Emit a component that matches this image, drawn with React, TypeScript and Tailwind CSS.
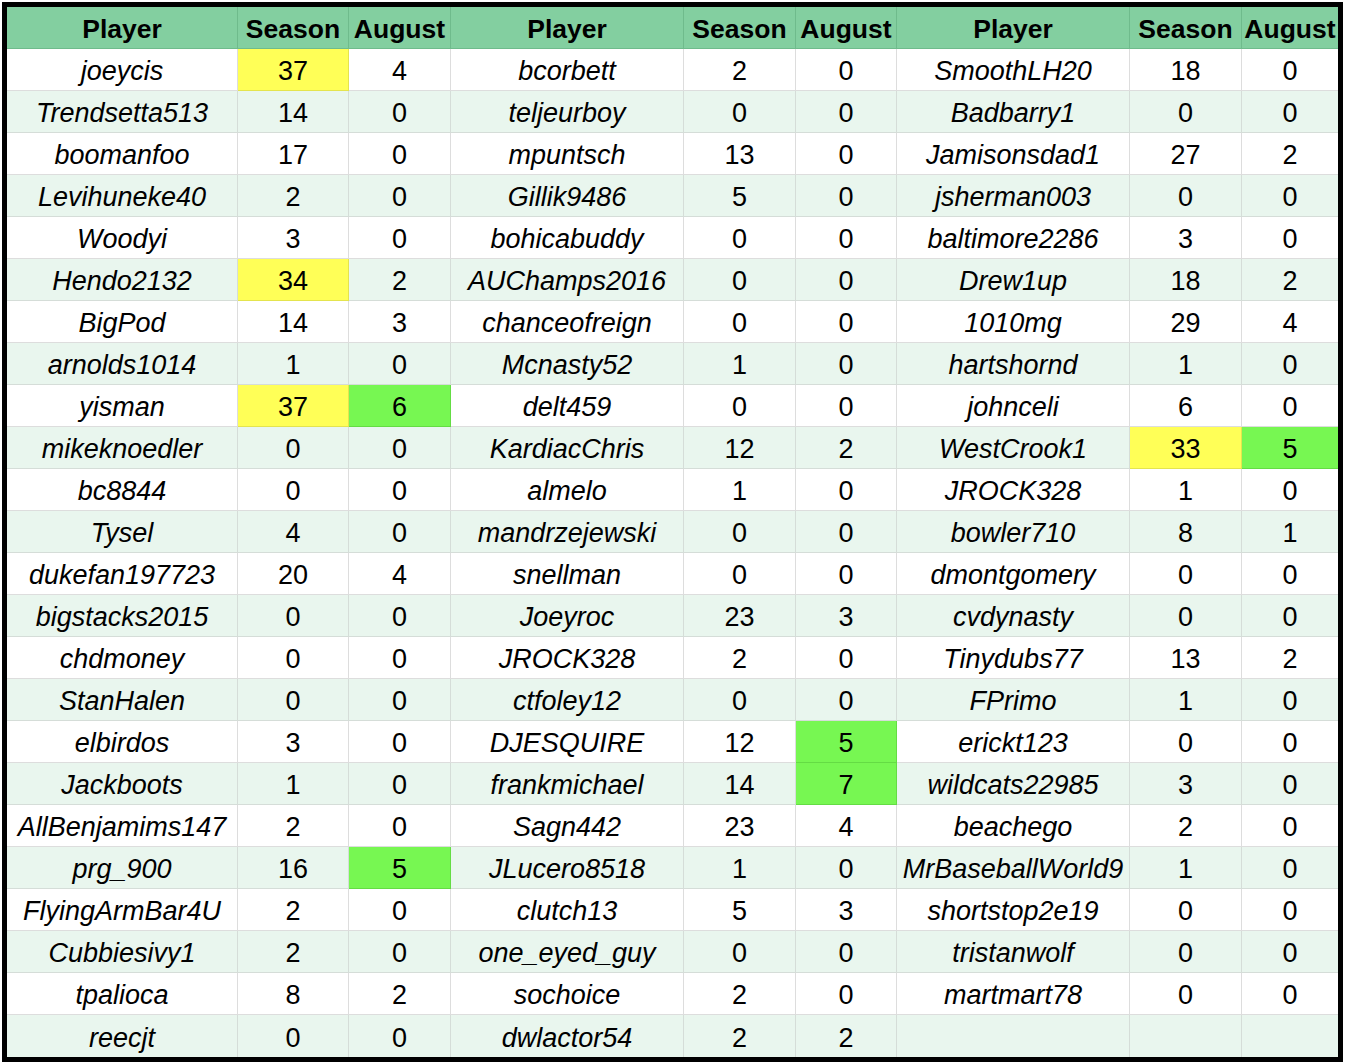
import React from "react";

type Row = [string, number, number, string?, string?];

// Y = yellow season cell, G = green august cell
const col1: Row[] = [
    ["joeycis", 37, 4, "Y"],
    ["Trendsetta513", 14, 0],
    ["boomanfoo", 17, 0],
    ["Levihuneke40", 2, 0],
    ["Woodyi", 3, 0],
    ["Hendo2132", 34, 2, "Y"],
    ["BigPod", 14, 3],
    ["arnolds1014", 1, 0],
    ["yisman", 37, 6, "Y", "G"],
    ["mikeknoedler", 0, 0],
    ["bc8844", 0, 0],
    ["Tysel", 4, 0],
    ["dukefan197723", 20, 4],
    ["bigstacks2015", 0, 0],
    ["chdmoney", 0, 0],
    ["StanHalen", 0, 0],
    ["elbirdos", 3, 0],
    ["Jackboots", 1, 0],
    ["AllBenjamims147", 2, 0],
    ["prg_900", 16, 5, "", "G"],
    ["FlyingArmBar4U", 2, 0],
    ["Cubbiesivy1", 2, 0],
    ["tpalioca", 8, 2],
    ["reecjt", 0, 0],
];

const col2: Row[] = [
    ["bcorbett", 2, 0],
    ["teljeurboy", 0, 0],
    ["mpuntsch", 13, 0],
    ["Gillik9486", 5, 0],
    ["bohicabuddy", 0, 0],
    ["AUChamps2016", 0, 0],
    ["chanceofreign", 0, 0],
    ["Mcnasty52", 1, 0],
    ["delt459", 0, 0],
    ["KardiacChris", 12, 2],
    ["almelo", 1, 0],
    ["mandrzejewski", 0, 0],
    ["snellman", 0, 0],
    ["Joeyroc", 23, 3],
    ["JROCK328", 2, 0],
    ["ctfoley12", 0, 0],
    ["DJESQUIRE", 12, 5, "", "G"],
    ["frankmichael", 14, 7, "", "G"],
    ["Sagn442", 23, 4],
    ["JLucero8518", 1, 0],
    ["clutch13", 5, 3],
    ["one_eyed_guy", 0, 0],
    ["sochoice", 2, 0],
    ["dwlactor54", 2, 2],
];

const col3: (Row | null)[] = [
    ["SmoothLH20", 18, 0],
    ["Badbarry1", 0, 0],
    ["Jamisonsdad1", 27, 2],
    ["jsherman003", 0, 0],
    ["baltimore2286", 3, 0],
    ["Drew1up", 18, 2],
    ["1010mg", 29, 4],
    ["hartshornd", 1, 0],
    ["johnceli", 6, 0],
    ["WestCrook1", 33, 5, "Y", "G"],
    ["JROCK328", 1, 0],
    ["bowler710", 8, 1],
    ["dmontgomery", 0, 0],
    ["cvdynasty", 0, 0],
    ["Tinydubs77", 13, 2],
    ["FPrimo", 1, 0],
    ["erickt123", 0, 0],
    ["wildcats22985", 3, 0],
    ["beachego", 2, 0],
    ["MrBaseballWorld9", 1, 0],
    ["shortstop2e19", 0, 0],
    ["tristanwolf", 0, 0],
    ["martmart78", 0, 0],
    null,
];

const widths = ["w-[231px]", "w-[111px]", "w-[102px]", "w-[233px]", "w-[112px]", "w-[101px]", "w-[233px]", "w-[112px]", "w-[96px]"];

const Cell = ({
    i,
    last,
    bg,
    italic,
    bold,
    children,
}: {
    i: number;
    last: boolean;
    bg: string;
    italic?: boolean;
    bold?: boolean;
    children?: React.ReactNode;
}) => {
    let fill = bg === "head" ? "bg-[#83cfa0] border-[#6fbb8c]" : bg === "alt" ? "bg-[#e9f6ee] border-[#d5ddd8]" : "bg-white border-[#dddddd]";
    if (bg === "Y") fill = "bg-[#ffff57] border-[#e4e44e]";
    if (bg === "G") fill = "bg-[#77f752] border-[#64dc44]";
    return (
        <div
            className={`${widths[i]} h-[42px] flex items-center justify-center pt-[3px] ${fill} ${i < 8 ? "border-r" : ""} ${last ? "" : "border-b"} ${italic ? "italic" : ""} ${bold ? "font-bold text-[26.5px]" : "text-[27px]"} whitespace-nowrap overflow-hidden`}
        >
            {children}
        </div>
    );
};

export default function App() {
    const headers = ["Player", "Season", "August", "Player", "Season", "August", "Player", "Season", "August"];

    return (
        <div className="bg-white min-h-[1064px] pt-[2px] pl-[2px]" style={{ fontFamily: '"Liberation Sans", Arial, sans-serif' }}>
            <div className="w-[1341px] border-[5px] border-black text-black leading-[30px]">
                <div className="flex">
                    {headers.map((h, i) => (
                        <Cell key={i} i={i} last={false} bg="head" bold>
                            {h}
                        </Cell>
                    ))}
                </div>
                {col1.map((r1, k) => {
                    const base = k % 2 === 1 ? "alt" : "plain";
                    const last = k === col1.length - 1;
                    const r2 = col2[k];
                    const r3 = col3[k];
                    return (
                        <div key={k} className="flex">
                            <Cell i={0} last={last} bg={base} italic>{r1[0]}</Cell>
                            <Cell i={1} last={last} bg={r1[3] === "Y" ? "Y" : base}>{r1[1]}</Cell>
                            <Cell i={2} last={last} bg={r1[4] === "G" ? "G" : base}>{r1[2]}</Cell>
                            <Cell i={3} last={last} bg={base} italic>{r2[0]}</Cell>
                            <Cell i={4} last={last} bg={r2[3] === "Y" ? "Y" : base}>{r2[1]}</Cell>
                            <Cell i={5} last={last} bg={r2[4] === "G" ? "G" : base}>{r2[2]}</Cell>
                            <Cell i={6} last={last} bg={base} italic>{r3 ? r3[0] : ""}</Cell>
                            <Cell i={7} last={last} bg={r3 && r3[3] === "Y" ? "Y" : base}>{r3 ? r3[1] : ""}</Cell>
                            <Cell i={8} last={last} bg={r3 && r3[4] === "G" ? "G" : base}>{r3 ? r3[2] : ""}</Cell>
                        </div>
                    );
                })}
            </div>
        </div>
    );
}
